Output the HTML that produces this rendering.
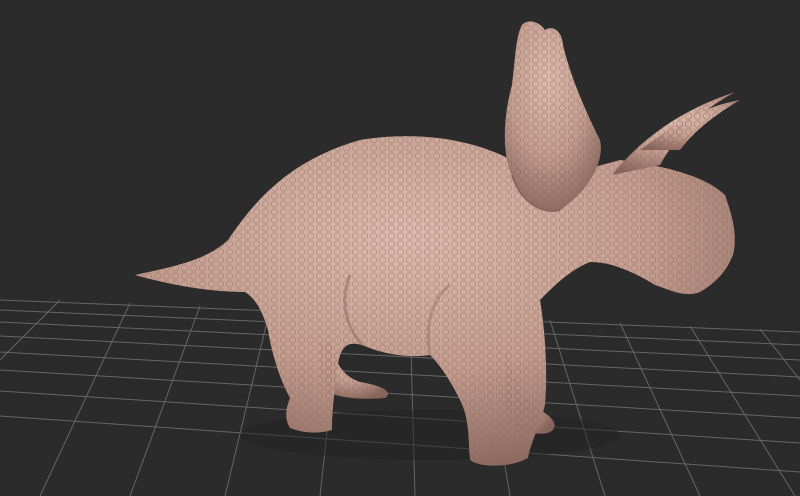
<!DOCTYPE html>
<html><head><style>
html,body{margin:0;padding:0;background:#2b2b2b;width:800px;height:496px;overflow:hidden}
svg{display:block}
</style></head><body>
<svg width="800" height="496" viewBox="0 0 800 496" xmlns="http://www.w3.org/2000/svg">
<defs>
<radialGradient id="g" cx="0.45" cy="0.3" r="0.75">
<stop offset="0" stop-color="#dcbcae"/>
<stop offset="0.55" stop-color="#c49e90"/>
<stop offset="1" stop-color="#86635a"/>
</radialGradient>
<pattern id="sc" width="9" height="8" patternUnits="userSpaceOnUse">
<circle cx="4.5" cy="4" r="3.2" fill="none" stroke="#8e6b5f" stroke-width="0.8" opacity="0.55"/>
</pattern>
</defs>
<rect width="800" height="496" fill="#2b2b2b"/>
<g stroke="#666" stroke-width="1" fill="none">
<path d="M0 300 L800 332 M0 310 L800 345 M0 322 L800 360 M0 336 L800 377 M0 352 L800 396 M0 370 L800 418 M0 391 L800 443 M0 416 L800 472"/>
<path d="M60 300 L0 360 M130 303 L40 496 M200 306 L130 496 M270 309 L225 496 M340 312 L320 496 M410 314 L415 496 M480 317 L510 496 M550 320 L605 496 M620 323 L700 496 M690 326 L795 496 M760 329 L800 380"/>
</g>
<ellipse cx="430" cy="435" rx="190" ry="25" fill="#222" opacity="0.5"/>
<g id="d">
<!-- hind far leg/foot -->
<path d="M330 340 C335 360 340 375 360 382 C380 385 395 392 385 398 C360 400 340 398 328 392 C320 375 318 355 320 340 Z"/>
<!-- far front foot -->
<path d="M505 350 C515 380 520 400 540 410 C555 418 560 428 548 433 C530 436 515 430 505 420 Z"/>
<!-- main body -->
<path d="M135 275 C165 268 205 262 228 240 C255 200 290 160 360 140 C420 130 480 140 520 165 C560 180 600 165 620 160 C660 165 705 175 725 195 C732 215 738 235 733 255 C725 275 712 285 700 292 C685 298 670 290 655 285 C630 270 610 262 590 262 C570 270 555 285 540 300 C545 330 548 370 545 405 C540 425 530 445 528 458 C510 468 480 468 470 460 C468 440 470 420 460 400 C450 380 440 365 430 355 C410 358 385 355 362 345 C345 340 340 350 338 365 C335 385 332 410 332 430 C315 435 300 432 290 428 C285 420 285 410 290 398 C280 380 272 355 268 330 C262 310 255 298 245 292 C210 292 170 285 135 275 Z"/>
<!-- frill -->
<path d="M560 210 C540 215 520 200 512 175 C500 150 505 110 512 85 C515 60 516 35 522 25 C528 18 540 22 545 30 C552 25 562 30 563 45 C570 75 585 110 600 140 C605 160 590 190 560 210 Z"/>
<!-- horns -->
<path d="M612 175 C640 140 680 110 735 92 C700 112 680 130 660 165 Z"/>
<path d="M640 150 C680 120 710 105 740 100 C715 115 695 130 680 150 Z"/>
</g>
<use href="#d" fill="url(#g)"/>
<use href="#d" fill="url(#sc)"/>
<path d="M560 210 C540 215 520 200 512 175" fill="none" stroke="#8a665b" stroke-width="2"/>
<path d="M362 345 C345 325 340 300 350 275" fill="none" stroke="#8c685d" stroke-width="3" opacity="0.5"/>
<path d="M430 355 C425 330 430 300 450 285" fill="none" stroke="#8c685d" stroke-width="3" opacity="0.4"/>
</svg>
</body></html>
